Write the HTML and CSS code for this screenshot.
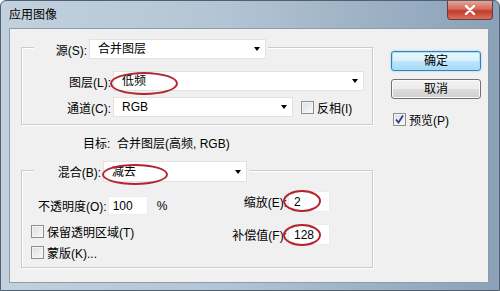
FILE: index.html
```html
<!DOCTYPE html>
<html lang="zh-CN">
<head>
  <meta charset="UTF-8">
  <title>应用图像</title>
  <link rel="stylesheet" href="styles.css">
</head>
<body>

<div class="window">
  <div class="titlebar">
    <span class="title">应用图像</span>
    <span class="close">
      <svg width="12" height="10" viewBox="0 0 12 10"><path d="M2 1 L10 9 M10 1 L2 9" stroke="#fff" stroke-width="2.4" stroke-linecap="round"/></svg>
    </span>
  </div>

  <div class="client">
    <div class="main">
      <!-- 源 -->
      <div class="group group-source">
        <div class="legend">
          <span class="lbl lbl-src">源(S):</span>
          <div class="combo combo-src">合并图层<i class="arrow"></i></div>
        </div>
        <div class="row">
          <span class="lbl lbl-row">图层(L):</span>
          <div class="combo combo-layer">低频<i class="arrow"></i></div>
        </div>
        <div class="row">
          <span class="lbl lbl-row">通道(C):</span>
          <div class="combo combo-channel">RGB<i class="arrow"></i></div>
          <span class="check check-invert"></span>
          <span class="check-text">反相(I)</span>
        </div>
      </div>

      <div class="target">目标:&nbsp; 合并图层(高频, RGB)</div>

      <!-- 混合 -->
      <div class="group group-blend">
        <div class="legend">
          <span class="lbl lbl-blend">混合(B):</span>
          <div class="combo combo-blend">减去<i class="arrow"></i></div>
        </div>
        <div class="blend-body">
          <div class="blend-left">
            <div class="opacity-row">
              <span>不透明度(O):</span>
              <div class="field field-opacity">100</div>
              <span class="pct">%</span>
            </div>
            <div class="check-row first">
              <span class="check"></span>
              <span class="check-text">保留透明区域(T)</span>
            </div>
            <div class="check-row">
              <span class="check"></span>
              <span class="check-text">蒙版(K)...</span>
            </div>
          </div>
          <div class="blend-right">
            <div class="num-row">
              <span>缩放(E):</span>
              <div class="field">2</div>
            </div>
            <div class="num-row">
              <span>补偿值(F):</span>
              <div class="field">128</div>
            </div>
          </div>
        </div>
      </div>
    </div>

    <div class="side">
      <button class="btn btn-default">确定</button>
      <button class="btn">取消</button>
      <div class="preview">
        <span class="check checked">
          <svg width="11" height="11" viewBox="0 0 11 11"><path d="M2 5.5 L4.5 8.5 L9 1.5" fill="none" stroke="#2b3f8f" stroke-width="1.8"/></svg>
        </span>
        <span class="check-text">预览(P)</span>
      </div>
    </div>
  </div>

  <!-- 标注 -->
  <span class="mark mark-layer"></span>
  <span class="mark mark-blend"></span>
  <span class="mark mark-scale"></span>
  <span class="mark mark-offset"></span>
</div>

</body>
</html>
```

FILE: styles.css
```css
body {
  margin: 0;
  font-family: "Liberation Sans", "Noto Sans CJK SC", sans-serif;
  font-size: 12px;
  color: #000;
}

.window {
  position: relative;
  width: 500px;
  height: 291px;
  box-sizing: border-box;
  padding: 0 10px 8px 8px;
  background: linear-gradient(to right, #c3d1de 0%, #b3c4d4 45%, #8aa1b7 100%);
  border: 1px solid #4f6072;
  border-radius: 6px 6px 0 0;
}

.titlebar {
  display: flex;
  height: 27px;
}

.title {
  margin-top: 6px;
  font-size: 12px;
  line-height: 16px;
}

.close {
  display: flex;
  align-items: center;
  justify-content: center;
  width: 44px;
  height: 18px;
  margin-left: auto;
  margin-right: -4px;
  background: linear-gradient(#e6a596, #d46a59 45%, #c13b2a 55%, #d9705e);
  border: 1px solid #6b3b3b;
  border-top: none;
  border-radius: 0 0 4px 4px;
}

.client {
  display: flex;
  height: 255px;
  box-sizing: border-box;
  background: #f0f0f0;
  border: 1px solid #8b9cad;
}

.main {
  width: 352px;
  margin-left: 11px;
}

/* group box */
.group {
  border: 1px solid #cbcbcb;
  box-shadow: inset 1px 1px 0 #fff, 1px 1px 0 #fff;
}

.group-source {
  margin-top: 18px;
  padding-bottom: 7px;
}

.group-blend {
  margin-top: 18px;
  padding-bottom: 7px;
}

.legend {
  display: flex;
  align-items: center;
  width: max-content;
  margin-left: 12px;
  padding-right: 2px;
  background: #f0f0f0;
}

.group-source .legend {
  margin-top: -9px;
  height: 20px;
}

.group-blend .legend {
  margin-top: -10px;
  height: 21px;
}

.lbl {
  text-align: right;
  white-space: nowrap;
}

.lbl-src { width: 53px; }
.lbl-blend { width: 67px; }
.lbl-row { width: 89px; }

.row {
  display: flex;
  align-items: center;
  height: 20px;
  margin-top: 6px;
}

.legend + .row {
  margin-top: 12px;
}

.combo {
  position: relative;
  height: 100%;
  box-sizing: border-box;
  margin-left: 2px;
  padding-left: 8px;
  line-height: 19px;
  background: #fff;
  border: 1px solid #e2e2e2;
}

.combo-src { width: 177px; }
.combo-layer { width: 251px; }
.combo-channel { width: 180px; }
.combo-blend { width: 144px; line-height: 20px; }

.arrow {
  position: absolute;
  right: 5px;
  top: 50%;
  margin-top: -2px;
  border-top: 4px solid #000;
  border-left: 3.5px solid transparent;
  border-right: 3.5px solid transparent;
}

.check {
  display: inline-flex;
  align-items: center;
  justify-content: center;
  width: 13px;
  height: 13px;
  box-sizing: border-box;
  border: 1px solid #8f8f8f;
  background: linear-gradient(135deg, #dcdcdc, #fbfbfb);
  box-shadow: inset 0 0 0 1px #f4f4f4;
}

.check-invert {
  margin-left: 8px;
}

.check-text {
  margin-left: 3px;
  white-space: nowrap;
}

.target {
  margin-top: 11px;
  padding-left: 62px;
  line-height: 16px;
}

/* blend body */
.blend-body {
  display: flex;
  justify-content: space-between;
}

.blend-left {
  padding-left: 9px;
}

.opacity-row {
  display: flex;
  align-items: center;
  height: 19px;
  margin-top: 14px;
  margin-left: 7px;
}

.field {
  height: 100%;
  box-sizing: border-box;
  width: 42px;
  margin-left: 1px;
  padding-left: 5px;
  line-height: 20px;
  background: #fff;
  border: 1px solid #ececec;
}

.field-opacity {
  width: 40px;
  padding-left: 4px;
  line-height: 18px;
}

.pct {
  margin-left: 9px;
}

.check-row {
  display: flex;
  align-items: center;
  height: 16px;
  margin-top: 5px;
}

.check-row.first {
  margin-top: 8px;
}

.blend-right {
  display: flex;
  flex-direction: column;
  align-items: flex-end;
  margin-top: 9px;
  margin-right: 42px;
}

.num-row {
  display: flex;
  align-items: center;
  height: 21px;
}

.num-row + .num-row {
  margin-top: 12px;
}

/* buttons */
.side {
  margin-left: 18px;
  padding-top: 22px;
}

.btn {
  display: block;
  width: 90px;
  height: 20px;
  padding: 0;
  margin-bottom: 8px;
  font: inherit;
  line-height: 16px;
  border: 1px solid #707070;
  border-radius: 3px;
  background: linear-gradient(#f2f2f2, #ebebeb 50%, #dddddd 50%, #cfcfcf);
  box-shadow: inset 0 0 0 1px #fcfcfc;
}

.btn-default {
  border-color: #3c7fb1;
  background: linear-gradient(#e9f6fd, #d9f0fc 50%, #bee6fd 50%, #a7d9f5);
  box-shadow: inset 0 0 0 1px #9fe3f7, 0 0 2px #7ac8ea;
}

.preview {
  display: flex;
  align-items: center;
  height: 16px;
  margin-top: 12px;
  margin-left: 2px;
}

/* red annotation ellipses */
.mark {
  position: absolute;
  box-sizing: border-box;
  border: 2px solid #b52530;
  border-radius: 50%;
}

.mark-layer { left: 109px; top: 71px; width: 68px; height: 23px; }
.mark-blend { left: 101px; top: 163px; width: 66px; height: 21px; }
.mark-scale { left: 282px; top: 189px; width: 38px; height: 22px; }
.mark-offset { left: 282px; top: 223px; width: 38px; height: 22px; }
```
